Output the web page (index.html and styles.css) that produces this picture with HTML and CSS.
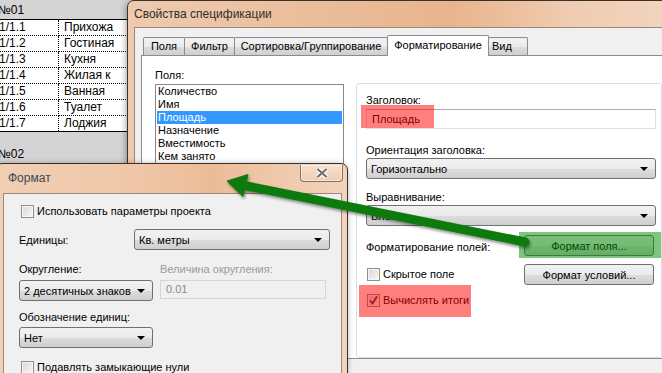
FILE: index.html
```html
<!DOCTYPE html>
<html lang="ru">
<head>
    <meta charset="UTF-8">
    <meta name="viewport" content="width=device-width, initial-scale=1.0">
    <title>Свойства спецификации</title>
    <link rel="stylesheet" href="styles.css">
</head>
<body>
    <div class="sheet">
        <div class="sheet-head">№01</div>
        <table class="rooms">
            <tr><td>1/1.1</td><td>Прихожа</td></tr>
            <tr><td>1/1.2</td><td>Гостиная</td></tr>
            <tr><td>1/1.3</td><td>Кухня</td></tr>
            <tr><td>1/1.4</td><td>Жилая к</td></tr>
            <tr><td>1/1.5</td><td>Ванная</td></tr>
            <tr><td>1/1.6</td><td>Туалет</td></tr>
            <tr><td>1/1.7</td><td>Лоджия</td></tr>
        </table>
        <div class="sheet-head second">№02</div>
    </div>

    <!-- main dialog -->
    <div class="window main-win">
        <div class="win-title">Свойства спецификации</div>
        <div class="win-client main-client">
            <div class="tabs">
                <div class="tab tab-fields">Поля</div>
                <div class="tab tab-filter">Фильтр</div>
                <div class="tab tab-sort">Сортировка/Группирование</div>
                <div class="tab tab-format active">Форматирование</div>
                <div class="tab tab-view">Вид</div>
            </div>
            <div class="tab-panel">
                <div class="fields-col">
                    <div class="lbl">Поля:</div>
                    <ul class="listbox">
                        <li>Количество</li>
                        <li>Имя</li>
                        <li class="selected">Площадь</li>
                        <li>Назначение</li>
                        <li>Вместимость</li>
                        <li>Кем занято</li>
                        <li>Комментарии</li>
                        <li>Номер</li>
                    </ul>
                </div>
                <div class="groupbox">
                    <div class="lbl">Заголовок:</div>
                    <div class="textbox">Площадь</div>
                    <div class="lbl gap-15">Ориентация заголовка:</div>
                    <div class="combo">Горизонтально</div>
                    <div class="lbl gap-12">Выравнивание:</div>
                    <div class="combo">Влево</div>
                    <div class="fmt-row first">
                        <span class="fmt-label">Форматирование полей:</span>
                        <button class="btn">Формат поля...</button>
                    </div>
                    <div class="fmt-row">
                        <label class="check"><span class="box"></span>Скрытое поле</label>
                        <button class="btn">Формат условий...</button>
                    </div>
                    <label class="check totals">
                        <span class="box">
                            <svg width="11" height="11" viewBox="0 0 11 11"><path d="M2 5.5 L4.5 8.5 L9 1.5" fill="none" stroke="#2b3a4a" stroke-width="1.8"/></svg>
                        </span>Вычислять итоги
                    </label>
                </div>
            </div>
        </div>
    </div>

    <!-- format dialog -->
    <div class="window fmt-win">
        <div class="win-title">
            <span>Формат</span>
            <span class="close-btn">
                <svg width="14" height="12" viewBox="0 0 14 12">
                    <path d="M2.5 2 L11.5 10 M11.5 2 L2.5 10" stroke="#fff" stroke-width="4.5"/>
                    <path d="M2.5 2 L11.5 10 M11.5 2 L2.5 10" stroke="#707070" stroke-width="2.2"/>
                </svg>
            </span>
        </div>
        <div class="win-client fmt-client">
            <label class="check"><span class="box"></span>Использовать параметры проекта</label>
            <div class="units-row">
                <span class="units-label">Единицы:</span>
                <div class="combo units-combo">Кв. метры</div>
            </div>
            <div class="round-grid">
                <span class="lbl">Округление:</span>
                <span class="lbl dim">Величина округления:</span>
                <div class="combo">2 десятичных знаков</div>
                <div class="textbox disabled">0.01</div>
            </div>
            <div class="lbl unit-sym">Обозначение единиц:</div>
            <div class="combo short">Нет</div>
            <label class="check zeros"><span class="box"></span>Подавлять замыкающие нули</label>
        </div>
    </div>

    <!-- annotations drawn over the screenshot -->
    <div class="mark red mark-title"></div>
    <div class="mark red mark-totals"></div>
    <div class="mark green mark-button"></div>

    <svg class="pointer" width="662" height="373" viewBox="0 0 662 373">
        <defs>
            <filter id="shadow" x="-5%" y="-30%" width="110%" height="160%">
                <feDropShadow dx="1" dy="2" stdDeviation="1.5" flood-color="#000" flood-opacity="0.45"/>
            </filter>
        </defs>
        <g filter="url(#shadow)" fill="#0c7a0c" stroke="#0c7a0c">
            <line x1="525" y1="242" x2="242" y2="185" stroke-width="9" stroke-linecap="round"/>
            <polygon points="227,181 248,174.5 243,196.5" stroke-width="1" stroke-linejoin="round"/>
        </g>
    </svg>
</body>
</html>
```

FILE: styles.css
```css
body {
    margin: 0;
    width: 662px;
    height: 373px;
    overflow: hidden;
    position: relative;
    background: #d4d4d4;
    font-family: "Liberation Sans", Arial, sans-serif;
    font-size: 11px;
    color: #000;
}

/* sheet behind the dialogs */
.sheet {
    width: 140px;
}

.sheet-head {
    font-size: 12px;
    height: 19px;
    line-height: 20px;
    margin-left: -2px;
}

.sheet-head.second {
    margin-top: 12px;
}

.rooms {
    width: 140px;
    border-collapse: collapse;
    background: #fff;
    border-top: 1px solid #000;
    border-bottom: 1px solid #000;
    font-size: 12px;
}

.rooms td {
    height: 15px;
    line-height: 15px;
    padding: 0 0 0 5px;
    border-bottom: 1px dotted #000;
    white-space: nowrap;
}

.rooms tr:last-child td {
    border-bottom: none;
}

.rooms td:first-child {
    width: 58px;
    padding-left: 0;
    text-indent: -1px;
    border-right: 1px dotted #000;
}

/* windows */
.window {
    position: absolute;
    box-sizing: border-box;
    border: 1px solid #3d3026;
    border-radius: 7px 7px 0 0;
    display: flex;
    flex-direction: column;
    box-shadow: -1px 1px 6px rgba(0, 0, 0, 0.35);
}

.win-title {
    flex: none;
    font-size: 12px;
    color: #2f2f2f;
}

.win-client {
    flex: 1;
    border: 1px solid #9c8878;
    background: #f0f0f0;
}

.main-win {
    left: 127px;
    top: 0;
    width: 560px;
    height: 400px;
    padding-left: 6px;
    background: linear-gradient(to right, #efcaae 0%, #ebbf9d 30%, #e8b48d 58%, #f0cdb2 80%, #f2d5bf 100%);
}

.main-win .win-title {
    height: 26px;
    line-height: 27px;
}

.main-client {
    padding: 7px 0 0 6px;
}

/* tabs */
.tabs {
    display: flex;
    align-items: flex-end;
    height: 20px;
    padding-left: 2px;
}

.tab {
    box-sizing: border-box;
    height: 18px;
    line-height: 17px;
    text-align: center;
    margin-right: -1px;
    border: 1px solid #898c95;
    border-bottom: none;
    border-radius: 2px 2px 0 0;
    background: linear-gradient(#f3f3f3, #ebebeb 50%, #dddddd 51%, #cfcfcf);
    white-space: nowrap;
}

.tab-fields { width: 42px; }
.tab-filter { width: 51px; }
.tab-sort { width: 154px; }
.tab-format { width: 102px; }
.tab-view { width: 40px; text-align: left; padding-left: 3px; }

.tab.active {
    position: relative;
    z-index: 1;
    height: 21px;
    line-height: 18px;
    margin-bottom: -1px;
    background: #fff;
}

.tab-panel {
    box-sizing: border-box;
    display: flex;
    height: 304px;
    padding-left: 13px;
    background: #fff;
    border: 1px solid #898c95;
}

.lbl {
    line-height: 13px;
    white-space: nowrap;
}

.fields-col {
    padding-top: 13px;
}

.listbox {
    box-sizing: border-box;
    width: 189px;
    height: 300px;
    margin: 2px 0 0;
    padding: 0;
    list-style: none;
    border: 1px solid #828790;
    background: #fff;
}

.listbox li {
    margin: 0 1px;
    padding-left: 1px;
    line-height: 13px;
}

.listbox li.selected {
    background: #3399ff;
    color: #fff;
}

.groupbox {
    box-sizing: border-box;
    width: 306px;
    height: 275px;
    margin: 27px 0 0 12px;
    padding: 10px 5px 0 9px;
    border: 1px solid #d5dfe5;
    border-radius: 3px;
}

.gap-15 { margin-top: 15px; }
.gap-12 { margin-top: 12px; }

.textbox {
    box-sizing: border-box;
    height: 20px;
    line-height: 18px;
    margin-top: 2px;
    padding-left: 5px;
    border: 1px solid #dbdfe6;
    border-top-color: #abadb3;
    background: #fff;
}

.textbox.disabled {
    height: 19px;
    line-height: 17px;
    margin-top: 0;
    border-color: #d6d6d6;
    background: #f0f0f0;
    color: #8a8a8a;
}

.combo {
    box-sizing: border-box;
    display: flex;
    align-items: center;
    justify-content: space-between;
    height: 21px;
    margin-top: 1px;
    padding: 0 7px 0 4px;
    border: 1px solid #707070;
    border-radius: 3px;
    background: linear-gradient(#f2f2f2, #ebebeb 50%, #dddddd 51%, #cfcfcf);
    white-space: nowrap;
}

.combo::after {
    content: "";
    border-left: 4px solid transparent;
    border-right: 4px solid transparent;
    border-top: 4px solid #000;
}

.fmt-row {
    display: flex;
    align-items: center;
    justify-content: space-between;
    margin-top: 8px;
    padding-right: 2px;
}

.fmt-row.first {
    margin-top: 9px;
    align-items: flex-start;
}

.fmt-label {
    padding-top: 6px;
    line-height: 13px;
}

.btn {
    box-sizing: border-box;
    width: 130px;
    height: 21px;
    padding: 0;
    font-family: inherit;
    font-size: 11px;
    color: #000;
    border: 1px solid #707070;
    border-radius: 3px;
    background: linear-gradient(#f2f2f2, #ebebeb 50%, #dddddd 51%, #cfcfcf);
}

.check {
    display: flex;
    align-items: center;
    gap: 3px;
    height: 13px;
    line-height: 13px;
    white-space: nowrap;
}

.box {
    box-sizing: border-box;
    display: flex;
    align-items: center;
    justify-content: center;
    width: 13px;
    height: 13px;
    margin-left: 1px;
    border: 1px solid #8e8f8f;
    box-shadow: inset 0 0 0 1px #f6f6f6;
    background: linear-gradient(135deg, #d6d6d6, #f8f8f8);
}

.check.totals {
    margin-top: 9px;
}

/* format dialog */
.fmt-win {
    left: -5px;
    top: 163px;
    width: 353px;
    height: 230px;
    padding: 0 5px 0 7px;
    background: linear-gradient(to right, #f1cfb5 0%, #efc6a7 40%, #ecbc98 62%, #f0cbb0 85%, #f2d3bc 100%);
}

.fmt-win .win-title {
    display: flex;
    height: 29px;
    line-height: 29px;
    padding-left: 5px;
    color: #3e4954;
}

.close-btn {
    box-sizing: border-box;
    display: flex;
    align-items: center;
    justify-content: center;
    width: 43px;
    height: 17px;
    margin: 1px -1px 0 auto;
    border: 1px solid #8c7060;
    border-top: none;
    border-radius: 0 0 4px 4px;
    background: linear-gradient(#f6dfcd, #efcdb3);
    box-shadow: inset 0 0 0 1px rgba(255, 255, 255, 0.5);
}

.fmt-client {
    padding: 11px 0 0 15px;
}

.fmt-client .check .box {
    margin-left: 2px;
}

.units-row {
    display: flex;
    align-items: center;
    margin-top: 11px;
}

.units-label {
    width: 115px;
}

.units-combo {
    width: 196px;
    margin-top: 0;
}

.round-grid {
    display: grid;
    grid-template-columns: 134px 166px;
    column-gap: 7px;
    row-gap: 4px;
    margin-top: 13px;
}

.round-grid .combo {
    margin-top: 0;
}

.lbl.dim {
    color: #9a9a9a;
}

.unit-sym {
    margin-top: 10px;
}

.combo.short {
    width: 134px;
    margin-top: 3px;
}

.check.zeros {
    margin-top: 13px;
}

/* highlight marks and arrow */
.mark {
    position: absolute;
    z-index: 5;
}

.mark.red {
    background: rgba(255, 0, 0, 0.5);
}

.mark.green {
    background: rgba(0, 140, 0, 0.5);
}

.mark-title {
    left: 361px;
    top: 105px;
    width: 73px;
    height: 23px;
}

.mark-totals {
    left: 359px;
    top: 285px;
    width: 112px;
    height: 32px;
}

.mark-button {
    left: 519px;
    top: 232px;
    width: 142px;
    height: 26px;
}

.pointer {
    position: absolute;
    left: 0;
    top: 0;
    z-index: 6;
}
```
